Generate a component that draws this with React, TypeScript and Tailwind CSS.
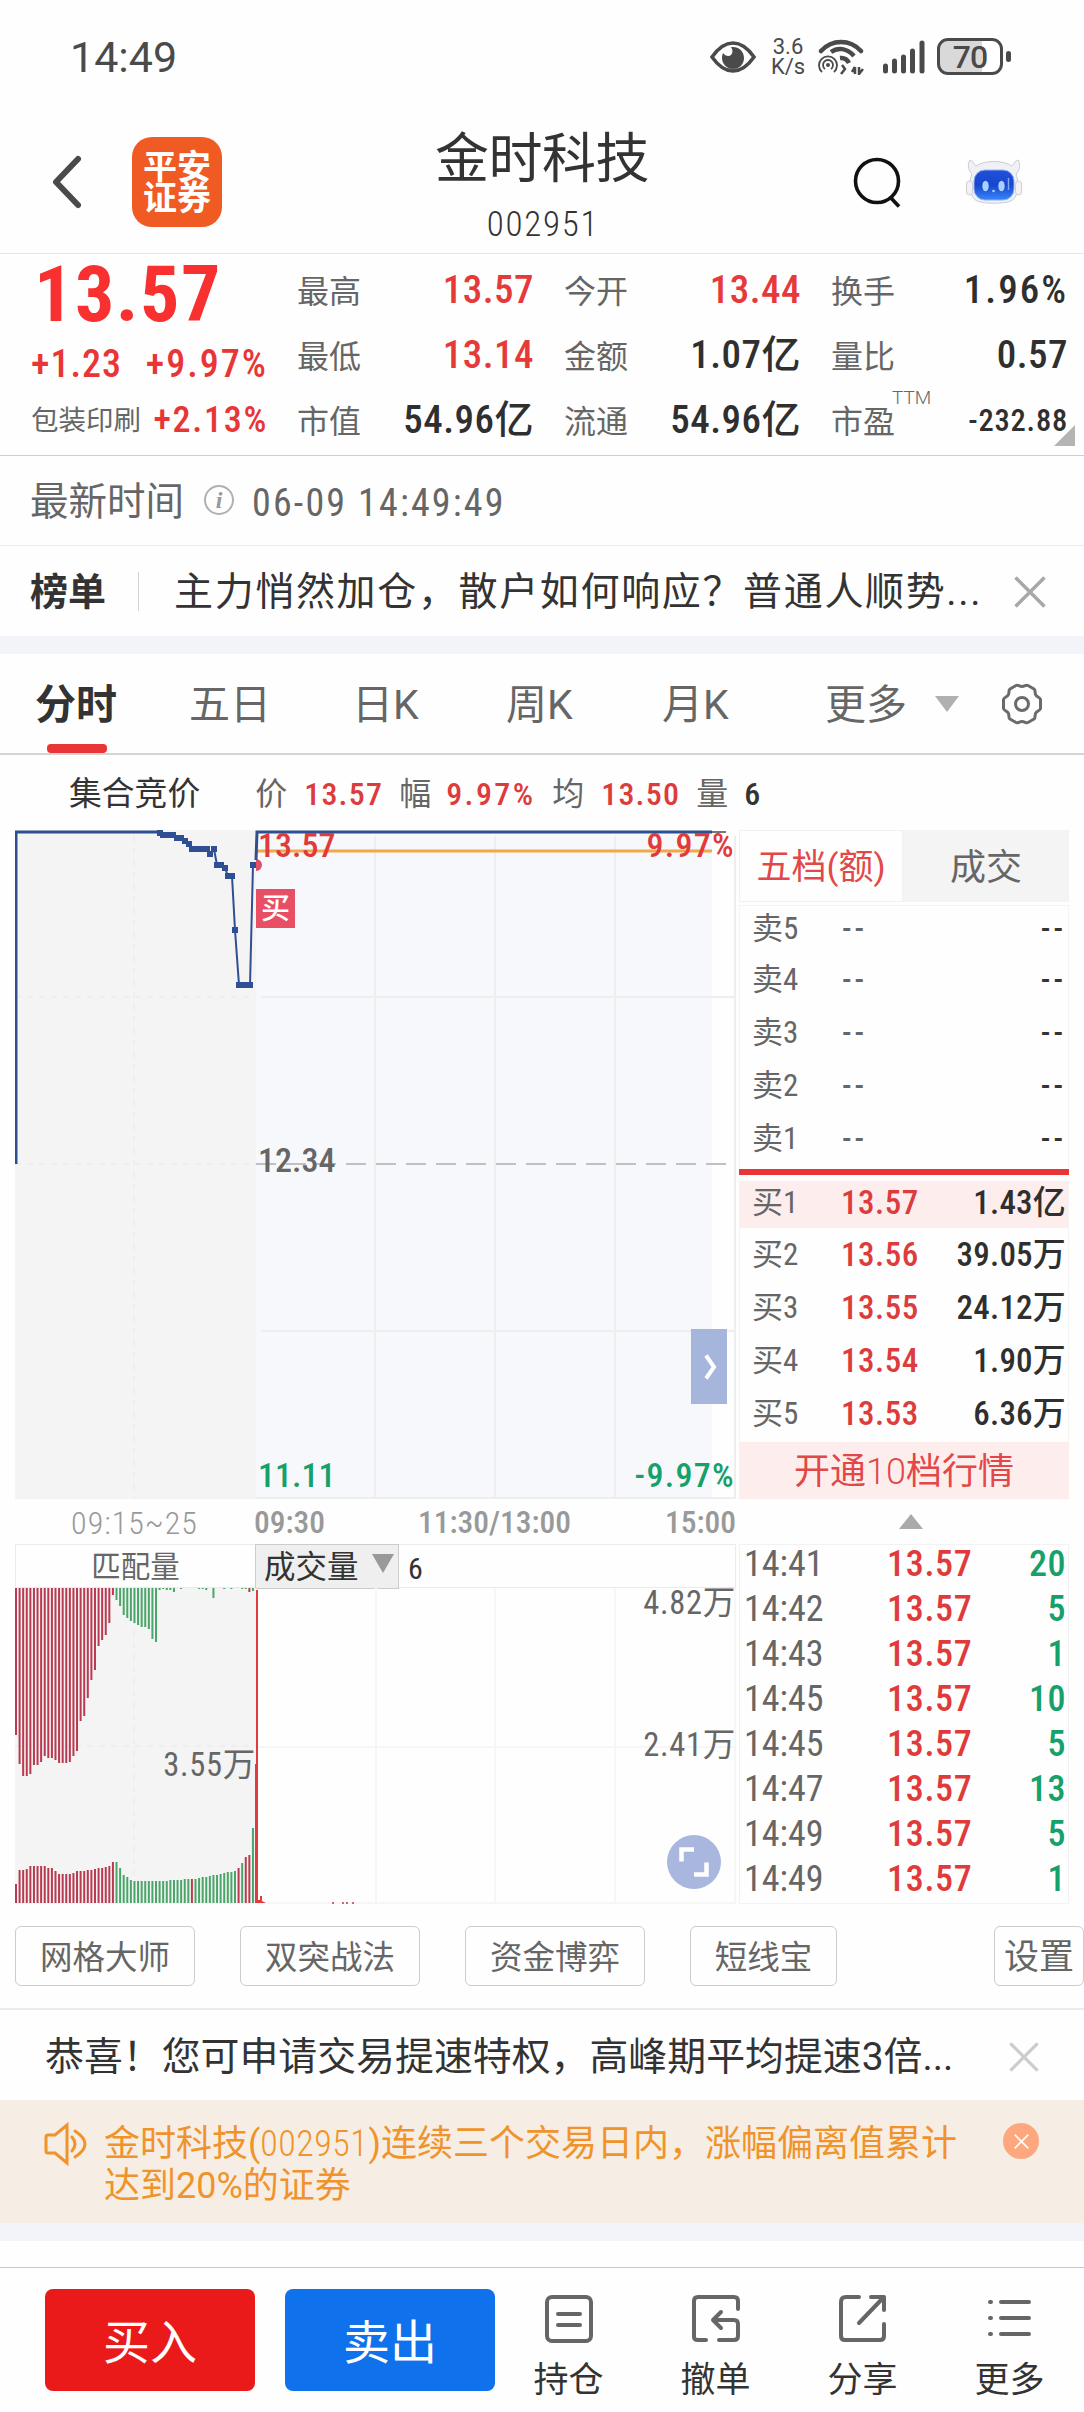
import type { ReactNode } from 'react';
import clsx from 'clsx';

type Cell = { label: string; value: string; red?: boolean };

const QUOTE_COLUMNS: Cell[][] = [
  [
    { label: '最高', value: '13.57', red: true },
    { label: '最低', value: '13.14', red: true },
    { label: '市值', value: '54.96亿' },
  ],
  [
    { label: '今开', value: '13.44', red: true },
    { label: '金额', value: '1.07亿' },
    { label: '流通', value: '54.96亿' },
  ],
];

const BIDS = [
  ['买1', '13.57', '1.43亿'],
  ['买2', '13.56', '39.05万'],
  ['买3', '13.55', '24.12万'],
  ['买4', '13.54', '1.90万'],
  ['买5', '13.53', '6.36万'],
];

const TRADES = [
  ['14:41', '20'],
  ['14:42', '5'],
  ['14:43', '1'],
  ['14:45', '10'],
  ['14:45', '5'],
  ['14:47', '13'],
  ['14:49', '5'],
  ['14:49', '1'],
];

// call auction: unmatched volume hangs from the top, matched volume stands at the bottom
const UNMATCHED = [
  147, 176, 188, 188, 186, 177, 177, 174, 168, 170, 170, 172, 175, 175, 175, 174, 168, 163, 133, 128,
  110, 92, 82, 58, 52, 47, 35, 7, 12, 18, 27, 30, 33, 35, 37, 39, 39, 41, 51, 54, 2, 1, 2, 2, 4, 0, 1,
  0, 0, 0, 0, 1, 1, 2, 0, 10, 0, 0, 1, 0, 1, 0, 0, 1, 1, 4, 3,
];
const MATCHED = [
  19, 33, 33, 34, 37, 37, 37, 37, 37, 35, 35, 32, 29, 29, 29, 29, 30, 32, 32, 32, 33, 33, 34, 35, 35,
  36, 37, 41, 41, 35, 28, 26, 23, 22, 22, 22, 22, 22, 22, 22, 22, 22, 22, 23, 23, 23, 23, 24, 24, 24,
  24, 25, 26, 26, 27, 28, 28, 29, 30, 31, 31, 32, 35, 40, 46, 48, 75,
];
const MATCHED_RED = [49, 62, 64, 65];

const AUCTION_POINTS: [number, number][] = [
  [160, 3], [163, 5], [167, 5], [170, 5], [173, 5], [177, 8], [181, 8], [185, 11], [189, 14],
  [192, 19], [196, 19], [200, 19], [204, 19], [207, 19], [210, 24], [214, 19], [217, 35], [221, 35],
  [225, 38], [228, 46], [232, 46], [235, 100], [239, 155], [243, 155], [247, 155], [250, 155], [253, 35],
];

function Num({ className, children }: { className?: string; children: ReactNode }) {
  return (
    <span className={clsx('whitespace-nowrap leading-none font-stretch-semi-condensed', className)}>
      {children}
    </span>
  );
}

function StatusBar() {
  return (
    <div className="flex h-[113px] items-center pl-[70px] pr-[73px] text-[#4a4a4a]">
      <span className="mt-[2px] text-[43px] leading-none">14:49</span>
      <div className="ml-auto flex items-center">
        <svg className="w-[46px] h-[32px]" viewBox="0 0 46 32" fill="none">
          <path d="M2 16C9 6 15 2 23 2s14 4 21 14C37 26 31 30 23 30S9 26 2 16Z" stroke="currentColor" strokeWidth="3.6" />
          <path d="M23 6c6 0 11 4.500 11 11s-5 11-11 11-11-5-11-11c0-2 .5-3.500 1-5 2 3 6 4 8 2s2-5 0-8Z" fill="currentColor" />
        </svg>
        <div className="ml-[12px] flex w-[40px] flex-col items-center text-[22px] leading-[20px]">
          <span>3.6</span>
          <span>K/s</span>
        </div>
        <svg className="ml-[10px] w-[46px] h-[36px]" viewBox="0 0 46 36" fill="none" stroke="currentColor">
          <path d="M3 12C14 0 32 0 43 12" strokeWidth="4.500" strokeLinecap="round" />
          <path d="M13 13C20 8 29 9 36 17" strokeWidth="4.500" />
          <path d="M22 19c4-.5 7 1 9 5" strokeWidth="4.500" />
          <path d="M4 33a9 9 0 1 1 12 0" strokeWidth="1.800" />
          <path d="M7 30a5 5 0 1 1 6 0" strokeWidth="1.800" />
          <circle cx="10" cy="26" r="2" fill="currentColor" stroke="none" />
          <path d="M24 26l3 4-4 5M37 28v7M34 33l3-5M41 28v7l4-5" strokeWidth="2.500" />
        </svg>
        <svg className="ml-[18px] w-[44px] h-[36px]" viewBox="0 0 44 36" stroke="currentColor" strokeWidth="5" strokeLinecap="round">
          <path d="M3.500 27v5M12.500 22v10M21.500 18v14M30.500 12v20M40 4v28" />
        </svg>
        <div className="relative ml-[11px] flex h-[37px] w-[66px] items-center justify-center overflow-hidden rounded-[11px] border-[3px] border-[#4a4a4a] bg-[linear-gradient(90deg,#d9d9d9_70%,#fff_70%)]">
          <span className="text-[32px] leading-none font-medium tracking-[-1px]">70</span>
        </div>
        <div className="ml-[3px] h-[11px] w-[5px] rounded-full bg-[#4a4a4a]" />
      </div>
    </div>
  );
}

function Header() {
  return (
    <div className="relative flex h-[141px] items-center border-b border-[#e6e6e6] pl-[50px] pb-[3px]">
      <svg className="w-[34px] h-[56px]" viewBox="0 0 34 56" fill="none" stroke="#4a4a4a" strokeWidth="6" strokeLinecap="round" strokeLinejoin="round">
        <path d="M28 5 6 28l22 23" />
      </svg>
      <div className="ml-[48px] flex size-[90px] flex-col items-center justify-center rounded-[20px] bg-[#f05a23] pt-[2px] text-[34px] leading-[31px] font-bold text-white">
        <span>平安</span>
        <span>证券</span>
      </div>
      <div className="absolute inset-x-0 top-0 flex flex-col items-center text-[#333]">
        <span className="mt-[15px] text-[54px] leading-[64px] font-normal tracking-[-0.5px]">金时科技</span>
        <Num className="mt-[15px] pl-[2px] text-[35px] font-light tracking-[1.700px]">002951</Num>
      </div>
      <div className="ml-auto flex items-center pr-[61px]">
        <svg className="w-[48px] h-[52px]" viewBox="0 0 48 52" fill="none" stroke="#111" strokeWidth="3.600">
          <circle cx="24" cy="25" r="21.500" />
          <path d="m38 42 8 8.500" />
        </svg>
        <svg className="ml-[64px] w-[58px] h-[48px]" viewBox="0 0 58 48">
          <defs>
            <linearGradient id="face" x1="0" y1="0" x2="0" y2="1">
              <stop offset="0" stopColor="#2250d8" />
              <stop offset="0.500" stopColor="#1646cf" />
              <stop offset="1" stopColor="#3a86f8" />
            </linearGradient>
          </defs>
          <path d="M7 16C2 11 3 5 5 2c4 1 4 5 6 6 9-6 27-6 36 0 2-1 2-5 6-6 2 3 3 9-2 14 4 10 2 24-5 27-8 3-26 3-34 0C5 40 3 26 7 16Z" fill="#eff1f6" stroke="#c9ced6" strokeWidth="1" />
          <rect x="1.500" y="23" width="6" height="14" rx="3" fill="#f6f0f1" stroke="#cfcfd6" />
          <rect x="50.500" y="23" width="6" height="14" rx="3" fill="#f6f0f1" stroke="#cfcfd6" />
          <rect x="9" y="12" width="40" height="30" rx="11" fill="url(#face)" stroke="#8fb0f2" strokeWidth="1" />
          <ellipse cx="20.500" cy="28" rx="3.200" ry="5.200" fill="#a9d2ff" />
          <ellipse cx="36.500" cy="28" rx="3.200" ry="5.200" fill="#a9d2ff" />
          <circle cx="28.500" cy="33" r="1.300" fill="#a9d2ff" />
          <path d="M43.500 20v12" stroke="#7fa6f5" strokeWidth="1.500" />
        </svg>
      </div>
    </div>
  );
}

function QuoteCell({ label, value, red }: Cell) {
  return (
    <div className="flex h-[65px] items-center justify-between">
      <span className="pt-[2px] text-[32px] leading-none text-[#666]">{label}</span>
      <Num
        className={clsx(
          'mr-[-1px] text-[39px] font-medium',
          red ? 'text-[#e63a3a]' : 'text-[#2f2f2f]',
          value.endsWith('%') ? 'tracking-[2px]' : 'tracking-[0.500px]',
        )}
      >
        {value}
      </Num>
    </div>
  );
}

function Quote() {
  return (
    <div className="relative flex h-[202px] border-b border-[#cfcfcf] pl-[31px]">
      <div className="w-[237px] text-[#e93535]">
        <Num className="mt-[2px] ml-[3px] block text-[78px] leading-[80px] font-bold tracking-[1.500px] text-[#f93030]">13.57</Num>
        <div className="flex h-[60px] items-center justify-between">
          <Num className="text-[38px] font-medium tracking-[1px]">+1.23</Num>
          <Num className="text-[38px] font-medium tracking-[2px]">+9.97%</Num>
        </div>
        <div className="flex h-[52px] items-center justify-between">
          <span className="pt-[2px] text-[27.500px] leading-none text-[#666]">包装印刷</span>
          <Num className="text-[36px] font-medium tracking-[1.700px]">+2.13%</Num>
        </div>
      </div>
      <div className="ml-[29px] grid grid-cols-3 gap-x-[31px] pt-[4px]">
        {QUOTE_COLUMNS.map((cells, i) => (
          <div key={i} className="w-[236px]">
            {cells.map((cell) => (
              <QuoteCell key={cell.label} {...cell} />
            ))}
          </div>
        ))}
        <div className="w-[236px]">
          <QuoteCell label="换手" value="1.96%" />
          <QuoteCell label="量比" value="0.57" />
          <div className="flex h-[65px] items-center">
            <span className="pt-[2px] text-[32px] leading-none text-[#666]">市盈</span>
            <span className="mb-[46px] ml-[-3px] text-[19px] leading-none font-light text-[#666]">TTM</span>
            <Num className="mr-[-1px] ml-auto pt-[1px] text-[30.500px] font-medium tracking-[0.800px] text-[#2f2f2f]">-232.88</Num>
          </div>
        </div>
      </div>
      <svg className="absolute right-[9px] bottom-[9px] size-[21px]" viewBox="0 0 21 21">
        <path d="M21 0v21H0Z" fill="#b4b4b4" />
      </svg>
    </div>
  );
}

function CloseIcon({ className }: { className?: string }) {
  return (
    <svg className={className} viewBox="0 0 32 32" fill="none" stroke="currentColor" strokeWidth="3.500">
      <path d="M1.500 1.500l29 29M30.500 1.500l-29 29" />
    </svg>
  );
}

function News() {
  return (
    <>
      <div className="flex h-[90px] items-center border-b border-[#ebebeb] pt-[4px] pl-[30px] text-[#666]">
        <span className="text-[38.500px] leading-none">最新时间</span>
        <div className="mt-[-6px] ml-[20px] flex size-[30px] items-center justify-center rounded-full border-2 border-[#b0b0b0] font-['Liberation_Serif',serif] text-[24px] leading-none font-bold text-[#999] italic">
          i
        </div>
        <Num className="ml-[18px] text-[38px] tracking-[2.150px]">06-09 14:49:49</Num>
      </div>
      <div className="flex h-[90px] items-center pt-[2px] pl-[30px] text-[#333]">
        <span className="text-[38px] leading-none font-bold">榜单</span>
        <div className="mt-[-2px] ml-[32px] h-[39px] w-px bg-[#d4d4d4]" />
        <span className="ml-[35px] text-[39px] leading-none whitespace-nowrap tracking-[1.650px]">
          主力悄然加仓，散户如何响应？普通人顺势...
        </span>
        <CloseIcon className="mr-[38px] ml-auto size-[32px] text-[#a8a8a8]" />
      </div>
      <div className="h-[18px] bg-[#f3f4f9]" />
    </>
  );
}

function Tabs() {
  return (
    <div className="flex h-[101px] items-center border-b-2 border-[#d4d4d4] pl-[35px] text-[41px] leading-none text-[#666]">
      <div className="relative flex h-full items-center pt-[4px] font-bold text-[#333]">
        分时
        <div className="absolute bottom-0 left-[12px] h-[9px] w-[60px] rounded-[4px] bg-[#e93535]" />
      </div>
      <span className="ml-[72px] w-[163px] pt-[4px]">五日</span>
      <span className="w-[154px] pt-[4px]">日K</span>
      <span className="w-[156px] pt-[4px]">周K</span>
      <span className="w-[163px] pt-[4px]">月K</span>
      <span className="pt-[4px]">更多</span>
      <svg className="ml-[28px] w-[24px] h-[16px]" viewBox="0 0 24 16">
        <path d="M0 0h24L12 16Z" fill="#b0b0b0" />
      </svg>
      <svg className="ml-[41px] size-[44px]" viewBox="0 0 44 44" fill="none" stroke="#6a6a6a" strokeWidth="3">
        <path d="M16 3.500c2-1 3 1 6 1s4-2 6-1l6 3.500c1.800 1.200.6 3 1.500 5.500s4.500 2.500 5 5v9c-.5 2.500-4 2.500-5 5s.3 4.300-1.500 5.500l-6 3.500c-2 1-3-1-6-1s-4 2-6 1l-6-3.500c-1.800-1.200-.6-3-1.500-5.500s-4.500-2.500-5-5v-9c.5-2.500 4-2.500 5-5s-.3-4.300 1.500-5.500Z" />
        <circle cx="22" cy="22" r="6.500" />
      </svg>
    </div>
  );
}

function PriceChart() {
  return (
    <div className="relative h-[669px] w-[721px] leading-none">
      <svg className="size-full" viewBox="0 0 721 669" fill="none">
        <rect width="241" height="669" fill="#f4f4f4" />
        <rect x="241" width="456" height="669" fill="#f7f8fb" />
        <g stroke="#eeeeef" strokeWidth="2">
          <path d="M0 167h241M0 334h241M119 6v663" strokeDasharray="6 6" />
          <path d="M246 167h475M246 501h475M241 668h480M360 6v663M480 6v663M600 6v663M720 6v663" />
        </g>
        <path d="M241 334h480" stroke="#c0c0c0" strokeWidth="2" strokeDasharray="20 10" />
        <path d="M241 2h480" stroke="#777" strokeWidth="2" strokeDasharray="20 10" />
        <path d="M242 23v-2h455" stroke="#f0a848" strokeWidth="3" />
        <path d="M1 334V2h144" stroke="#2f4f94" strokeWidth="3" />
        <polyline points={AUCTION_POINTS.map(([x, y]) => `${x - 15},${y}`).join(' ')} stroke="#2f4f94" strokeWidth="2" />
        {AUCTION_POINTS.map(([x, y]) => (
          <rect key={x} x={x - 18} y={y - 3} width="6" height="6" fill="#2f4f94" />
        ))}
        <path d="M241 29a5.500 5.500 0 0 1 0 12Z" fill="#e0506a" />
        <path d="M241 30 242 2h455" stroke="#2f4f94" strokeWidth="3" />
      </svg>
      <Num className="absolute top-[-2px] left-[243px] text-[34px] font-medium text-[#e03a3a]">13.57</Num>
      <Num className="absolute top-[-2px] right-[1px] text-[34px] font-medium tracking-[1.300px] text-[#e03a3a]">9.97%</Num>
      <Num className="absolute top-[313px] left-[243px] text-[34px] font-medium text-[#666]">12.34</Num>
      <Num className="absolute top-[628px] left-[243px] text-[34px] font-medium text-[#16a06a]">11.11</Num>
      <Num className="absolute top-[628px] right-[1px] text-[34px] font-medium tracking-[1.300px] text-[#16a06a]">-9.97%</Num>
      <div className="absolute top-[59px] left-[241px] flex size-[39px] items-center justify-center bg-[#e84f64] pt-[2px] text-[29px] font-medium text-white">
        买
      </div>
      <div className="absolute top-[499px] left-[676px] flex h-[75px] w-[36px] items-center justify-center bg-[#a6b5dc] pl-[3px]">
        <svg className="w-[14px] h-[26px]" viewBox="0 0 14 26" fill="none" stroke="#fff" strokeWidth="4">
          <path d="M2 1.500 10 13 2 24.500" />
        </svg>
      </div>
    </div>
  );
}

function VolumeChart() {
  return (
    <div className="relative h-[316px] w-[721px]">
      <svg className="size-full" viewBox="0 0 721 316" fill="none">
        <rect width="241" height="316" fill="#f4f4f4" />
        <path d="M0 158h241M119 6v310" stroke="#eeeeee" strokeWidth="2" strokeDasharray="6 6" />
        <path d="M241 159h480M361 0v316M480 0v316M600 0v316M720 0v316M241 315h480" stroke="#f6f6f6" strokeWidth="2" />
        {UNMATCHED.map((h, i) => (
          <rect key={i} x={i * 3.59} y="0" width="2" height={h} fill={i < 28 || i === 65 ? '#b93a50' : '#4aa668'} />
        ))}
        {MATCHED.map((h, i) => (
          <rect
            key={i}
            x={i * 3.59}
            y={315 - h}
            width="2"
            height={h}
            fill={i < 28 || MATCHED_RED.includes(i) ? '#b93a50' : '#4aa668'}
          />
        ))}
        <path d="M241 2h2v310h2v-4h2v5l4 2h-11V176h1Z" fill="#e23b3b" />
        <path d="M317 315h2M327 315h2M331 315h2M337 315h2" stroke="#b04040" strokeWidth="1.500" />
      </svg>
      <Num className="absolute top-[-1px] right-0 text-[32.500px] tracking-[0.700px] text-[#666]">4.82万</Num>
      <Num className="absolute top-[141px] right-0 text-[32.500px] tracking-[0.700px] text-[#666]">2.41万</Num>
      <Num className="absolute top-[161px] right-[480px] text-[32.500px] tracking-[0.700px] text-[#666]">3.55万</Num>
      <div className="absolute top-[247px] left-[652px] flex size-[54px] items-center justify-center rounded-full bg-[#a9b7df]">
        <svg className="size-[30px]" viewBox="0 0 30 30" fill="none" stroke="#fff" strokeWidth="4.500">
          <path d="M2.500 14.500v-12H15M27.500 15.500v12H15" />
        </svg>
      </div>
    </div>
  );
}

function ChartColumn() {
  return (
    <div className="w-[721px]">
      <PriceChart />
      <div className="relative flex h-[45px] items-center pt-[2px] text-[31.500px] font-medium text-[#999]">
        <Num className="w-[239px] text-center text-[32px] font-light tracking-[1px]">09:15~25</Num>
        <Num>09:30</Num>
        <Num className="absolute left-[403px]">11:30/13:00</Num>
        <Num className="ml-auto">15:00</Num>
      </div>
      <div className="flex h-[44px] items-center border border-[#ebebeb] text-[#333]">
        <span className="w-[239px] pt-[4px] text-center text-[29.500px] leading-none text-[#666]">匹配量</span>
        <div className="-my-px flex h-[45px] w-[144px] items-center border border-[#ccc] bg-[#efefef] pt-[3px] pl-[8px] text-[31.500px] leading-none">
          成交量
          <svg className="mb-[9px] ml-[13px] w-[22px] h-[19px]" viewBox="0 0 22 19">
            <path d="M0 0h22L11 19Z" fill="#999" />
          </svg>
        </div>
        <Num className="ml-[9px] pt-[5px] text-[30px]">6</Num>
      </div>
      <VolumeChart />
    </div>
  );
}

function OrderBook() {
  return (
    <div className="ml-[3px] w-[330px]">
      <div className="flex h-[72px] text-[36px] leading-none">
        <div className="flex w-[164px] items-center justify-center border border-[#f1f1f1] pt-[3px] text-[35px] whitespace-nowrap text-[#e34848]">
          五档(额)
        </div>
        <div className="flex flex-1 items-center justify-center bg-[#f4f4f4] pt-[3px] text-[#666]">成交</div>
      </div>
      <div className="mt-[3px] h-[264px] border border-b-0 border-[#f4f4f4]">
        {[5, 4, 3, 2, 1].map((n, i) => (
          <div key={n} className={clsx('flex items-center pr-[2px] pl-[12px] text-[#666]', i === 0 ? 'h-[49px] pb-[4px]' : 'h-[53px] pb-[4px]')}>
            <Num className="w-[90px] text-[31px]">卖{n}</Num>
            <Num className="text-[31px] font-medium tracking-[3px]">--</Num>
            <Num className="ml-auto text-[31px] font-medium tracking-[3px] text-[#333]">--</Num>
          </div>
        ))}
      </div>
      <div className="h-[6px] bg-[#e93535]" />
      <div className="mt-[6px] h-[261px] border-x border-[#f4f4f4]">
        {BIDS.map(([label, price, amount], i) => (
          <div key={label} className={clsx('flex items-center pr-[2px] pl-[12px]', i === 0 ? 'mb-[2px] h-[47px] bg-[#fdeeed] pb-[5px]' : 'h-[53px] pb-[5px]')}>
            <Num className="w-[89px] text-[31px] text-[#666]">{label}</Num>
            <Num className="text-[33px] font-medium tracking-[0.500px] text-[#dc3c3c]">{price}</Num>
            <Num className="ml-auto text-[33px] font-medium tracking-[0.200px] text-[#2f2f2f]">{amount}</Num>
          </div>
        ))}
      </div>
      <div className="flex h-[57px] items-center justify-center pt-[3px] bg-[#fdeeed] text-[36px] leading-none text-[#e34848]">
        <span>
          开通<span className="font-light">10</span>档行情
        </span>
      </div>
      <div className="flex h-[45px] justify-center pt-[15px] pl-[14px]">
        <svg className="w-[24px] h-[15px]" viewBox="0 0 24 15">
          <path d="M0 15h24L12 0Z" fill="#aaa" />
        </svg>
      </div>
      <div className="h-[360px] border border-[#f2f2f2] pr-[2px] pl-[4px]">
        {TRADES.map(([time, volume], i) => (
          <div key={i} className="flex h-[45px] items-center pb-[8px]">
            <Num className="w-[143px] text-[36px] text-[#666]">{time}</Num>
            <Num className="text-[36px] font-medium tracking-[0.700px] text-[#e03a3a]">13.57</Num>
            <Num className="ml-auto text-[36px] font-medium tracking-[0.500px] text-[#16a06a]">{volume}</Num>
          </div>
        ))}
      </div>
    </div>
  );
}

function Chips() {
  return (
    <div className="flex h-[106px] gap-[45px] border-b-2 border-[#ebebeb] pt-[22px] pl-[15px] text-[32.500px] leading-none text-[#666]">
      {['网格大师', '双突战法', '资金博弈'].map((name) => (
        <div key={name} className="flex h-[60px] w-[180px] items-center justify-center rounded-[6px] border border-[#ccc] pt-[4px]">
          {name}
        </div>
      ))}
      <div className="flex h-[60px] w-[147px] items-center justify-center rounded-[6px] border border-[#ccc] pt-[4px]">短线宝</div>
      <div className="ml-auto flex h-[60px] w-[90px] items-center justify-center rounded-[6px] border border-[#ccc] pt-[3px] text-[35px]">
        设置
      </div>
    </div>
  );
}

function Notices() {
  return (
    <>
      <div className="flex h-[90px] items-center pt-[4px] pl-[45px] text-[#333]">
        <span className="text-[38.900px] leading-none whitespace-nowrap">
          恭喜！您可申请交易提速特权，高峰期平均提速3倍...
        </span>
        <CloseIcon className="mr-[45px] ml-auto size-[30px] text-[#ccc]" />
      </div>
      <div className="flex h-[123px] bg-[#f6eee4] pl-[43px] text-[#f0932b]">
        <svg className="mt-[22px] w-[46px] h-[44px]" viewBox="0 0 46 44" fill="none" stroke="currentColor" strokeWidth="3">
          <path d="M24 3v38L12 31H5q-2 0-2-2V15q0-2 2-2h7L24 3Z" />
          <path d="M29 15q6 7 0 14M32 9q20 13 0 26" strokeLinecap="round" />
        </svg>
        <p className="mt-[23px] ml-[15px] text-[36px] leading-[42px] whitespace-nowrap">
          金时科技(<span className="font-light font-stretch-semi-condensed tracking-[0.500px]">002951</span>)连续三个交易日内，涨幅偏离值累计
          <br />
          达到20%的证券
        </p>
        <div className="mt-[23px] mr-[45px] ml-auto flex size-[36px] items-center justify-center rounded-full bg-[#fca77e] text-white">
          <CloseIcon className="size-[15px]" />
        </div>
      </div>
      <div className="h-[18px] bg-[#f3f4f9]" />
    </>
  );
}

function BarItem({ label, children }: { label: string; children: ReactNode }) {
  return (
    <div className="flex w-[147px] flex-col items-center text-[#333]">
      <svg className="size-[52px]" viewBox="0 0 52 52" fill="none" stroke="#666" strokeWidth="4" strokeLinecap="round" strokeLinejoin="round">
        {children}
      </svg>
      <span className="mt-[18px] text-[35px] leading-none">{label}</span>
    </div>
  );
}

function BottomBar() {
  return (
    <div className="mt-[26px] flex h-[145px] border-t border-[#c8c8c8] pt-[21px] pl-[45px]">
      <button className="h-[102px] w-[210px] rounded-[8px] bg-[#ea1a1a] pt-[5px] text-[47px] leading-none text-white">买入</button>
      <button className="ml-[30px] h-[102px] w-[210px] rounded-[8px] bg-[#0f72ec] pt-[5px] text-[47px] leading-none text-white">卖出</button>
      <div className="flex pt-[4px]">
        <BarItem label="持仓">
          <rect x="4" y="4" width="44" height="44" rx="5" />
          <path d="M15 21h22M15 32h22" />
        </BarItem>
        <BarItem label="撤单">
          <path d="M48 16V8q0-4-4-4H8Q4 4 4 8v36q0 3 4 3h8M29 47h15q4 0 4-4V31q0-4-4-4H24m7-8-8 8 8 8" />
        </BarItem>
        <BarItem label="分享">
          <path d="M22 4H9Q4 4 4 9v34q0 4 4 4h35q4 0 4-4V31M34 4h13v13M46 5 22 30" />
        </BarItem>
        <BarItem label="更多">
          <path d="M17 9h28M17 25h28M17 41h28M6 9h1M6 25h1M6 41h1" />
        </BarItem>
      </div>
    </div>
  );
}

export default function App() {
  return (
    <main className="h-[2412px] w-[1084px] overflow-hidden bg-[#fefefe] font-['Roboto','Noto_Sans_CJK_SC',sans-serif]">
      <StatusBar />
      <Header />
      <Quote />
      <News />
      <Tabs />
      <div className="flex h-[75px] items-center pt-[3px] pl-[69px] text-[32px] leading-none text-[#666]">
        <span className="mr-[55px] text-[32.800px] text-[#333]">集合竞价</span>
        <span className="w-[49px]">价</span>
        <Num className="w-[95px] font-medium tracking-[1.200px] text-[#dc3c3c]">13.57</Num>
        <span className="w-[47px]">幅</span>
        <Num className="w-[106px] font-medium tracking-[2.400px] text-[#dc3c3c]">9.97%</Num>
        <span className="w-[49px]">均</span>
        <Num className="w-[95px] font-medium tracking-[1.200px] text-[#dc3c3c]">13.50</Num>
        <span className="w-[48px]">量</span>
        <Num className="font-medium text-[#333]">6</Num>
      </div>
      <div className="flex pl-[15px]">
        <ChartColumn />
        <OrderBook />
      </div>
      <Chips />
      <Notices />
      <BottomBar />
    </main>
  );
}
